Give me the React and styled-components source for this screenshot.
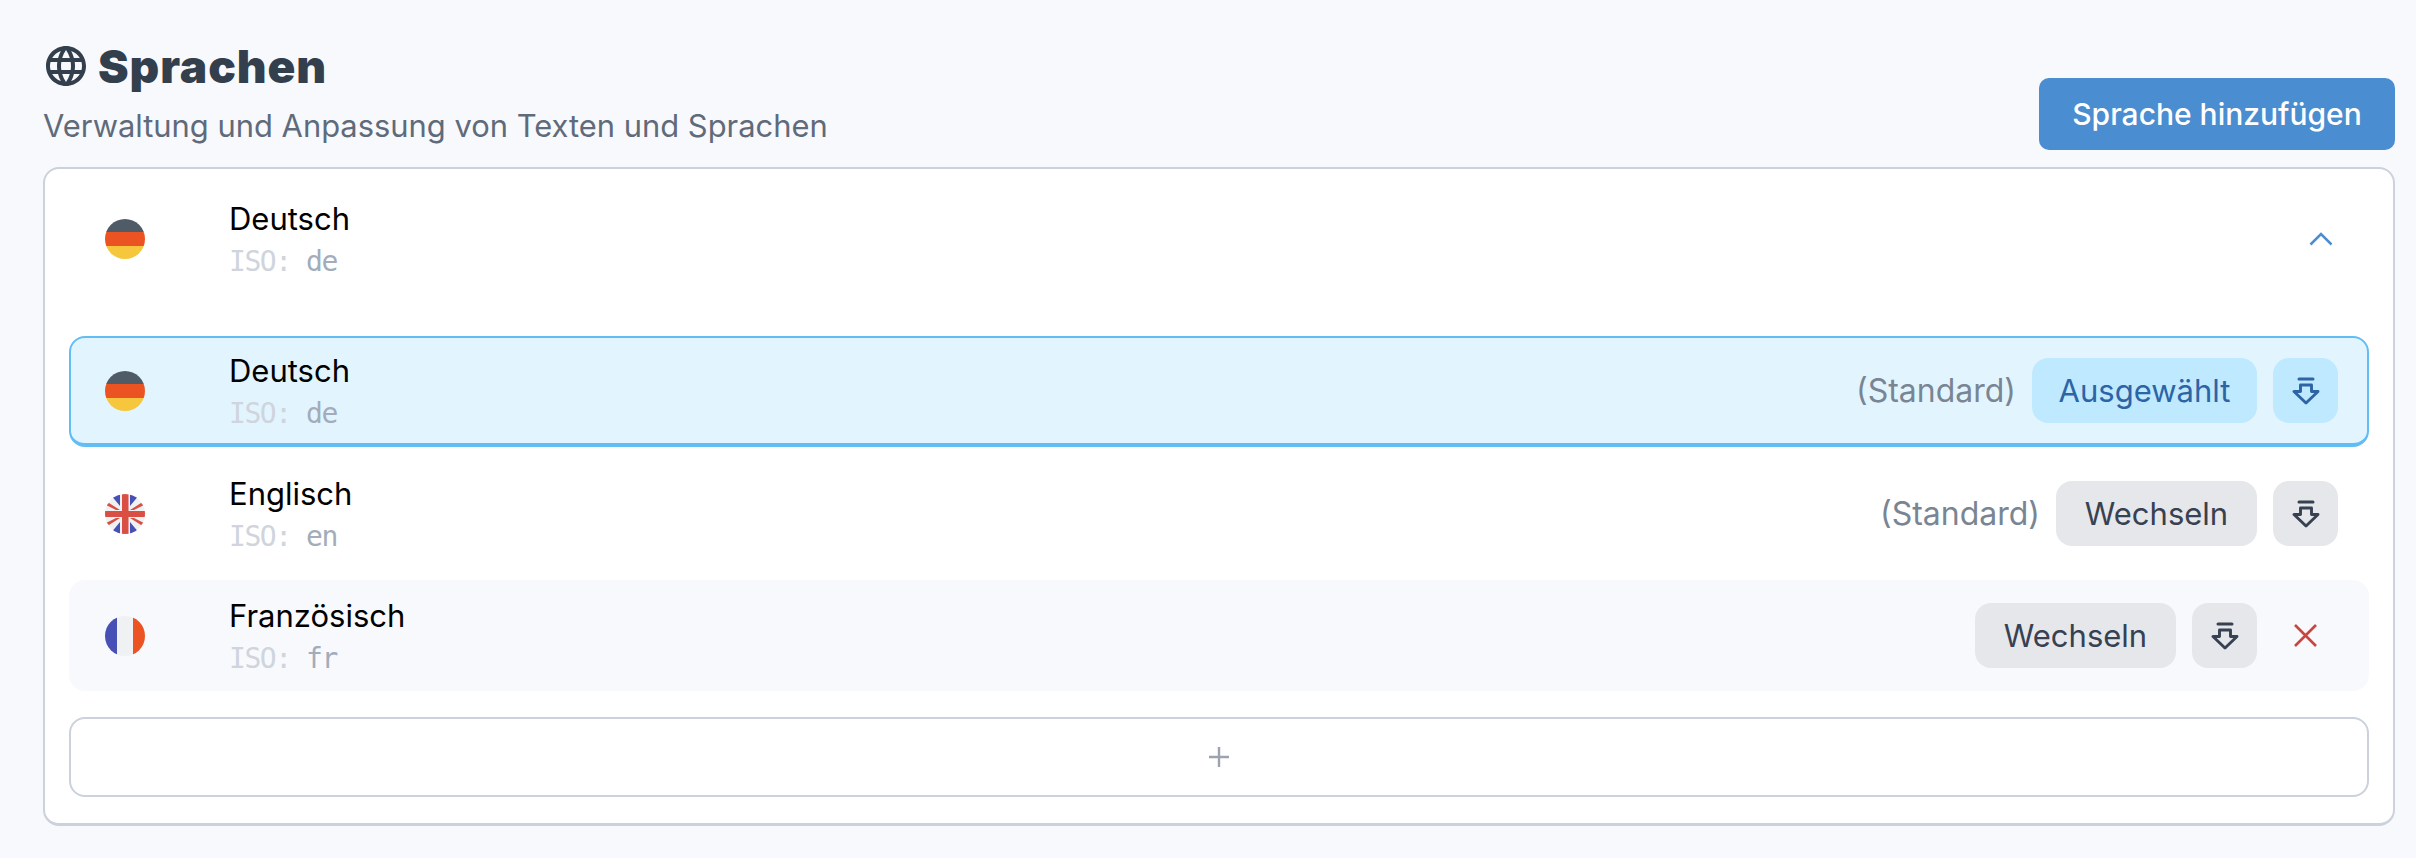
import React from 'react'
import styled, { createGlobalStyle, css } from 'styled-components'
import { MdLanguage } from 'react-icons/md'

const LANGUAGES = [
  { name: 'Deutsch', iso: 'de', flag: 'de', isDefault: true, selected: true },
  { name: 'Englisch', iso: 'en', flag: 'en', isDefault: true },
  { name: 'Französisch', iso: 'fr', flag: 'fr', removable: true, tinted: true },
]

export default function App() {
  return (
    <>
      <GlobalStyle />
      <Page>
        <Header>
          <div>
            <Title>
              <MdLanguage size={48} />
              <span>Sprachen</span>
            </Title>
            <Subtitle>Verwaltung und Anpassung von Texten und Sprachen</Subtitle>
          </div>
          <PrimaryButton>Sprache hinzufügen</PrimaryButton>
        </Header>

        <Card>
          <GroupHeader>
            <FlagCell>
              <Flag code="de" />
            </FlagCell>
            <Info>
              <Name>Deutsch</Name>
              <Iso>
                <IsoLabel>ISO:</IsoLabel> de
              </Iso>
            </Info>
            <Chevron viewBox="0 0 24 14">
              <path d="M1.5 12.5 12 2l10.5 10.5" />
            </Chevron>
          </GroupHeader>

          <List>
            {LANGUAGES.map((lang) => (
              <Row key={lang.iso} $selected={lang.selected} $tinted={lang.tinted}>
                <FlagCell>
                  <Flag code={lang.flag} />
                </FlagCell>
                <Info>
                  <Name>{lang.name}</Name>
                  <Iso>
                    <IsoLabel>ISO:</IsoLabel> {lang.iso}
                  </Iso>
                </Info>
                <Actions>
                  {lang.isDefault && <DefaultNote>(Standard)</DefaultNote>}
                  <ActionButton $selected={lang.selected}>
                    {lang.selected ? 'Ausgewählt' : 'Wechseln'}
                  </ActionButton>
                  <IconButton $selected={lang.selected}>
                    <DownloadIcon />
                  </IconButton>
                  {lang.removable && (
                    <RemoveButton>
                      <svg width="24" height="24" viewBox="0 0 24 24">
                        <path d="M1 1l21 21M22 1 1 22" />
                      </svg>
                    </RemoveButton>
                  )}
                </Actions>
              </Row>
            ))}
          </List>

          <AddRow>
            <svg width="24" height="24" viewBox="0 0 24 24">
              <path d="M12 2v20M2 12h20" />
            </svg>
          </AddRow>
        </Card>
      </Page>
    </>
  )
}

function DownloadIcon() {
  return (
    <svg width="28" height="28" viewBox="0 0 28 28" fill="none" stroke="currentColor" strokeLinejoin="round">
      <path d="M7 2h14" strokeWidth="3" strokeLinecap="round" />
      <path d="M8.5 8h11v6.5H26L14 26 2 14.5h6.5z" strokeWidth="2.9" />
    </svg>
  )
}

function Flag({ code }) {
  return (
    <FlagCircle viewBox="0 0 40 40">
      {code === 'de' && (
        <>
          <rect width="40" height="13" fill="#4f5b66" />
          <rect y="13" width="40" height="14" fill="#eb5322" />
          <rect y="27" width="40" height="13" fill="#f6c63c" />
        </>
      )}
      {code === 'fr' && (
        <>
          <rect width="12" height="40" fill="#4750b5" />
          <rect x="12" width="16" height="40" fill="#f0f1f3" />
          <rect x="28" width="12" height="40" fill="#eb5322" />
        </>
      )}
      {code === 'en' && (
        <>
          <rect width="40" height="40" fill="#f0f1f3" />
          <path d="M5 0h10v12zM35 0H25v12zM5 40h10V28zM35 40H25V28z" fill="#4750b5" />
          <path d="M1 11l3-2 11 7h-4zM39 11l-3-2-11 7h4zM1 29l3 2 11-7h-4zM39 29l-3 2-11-7h4z" fill="#d94f43" />
          <rect x="17" width="6.5" height="40" fill="#d94f43" />
          <rect y="17" width="40" height="6" fill="#d94f43" />
        </>
      )}
    </FlagCircle>
  )
}

const GlobalStyle = createGlobalStyle`
  html, body {
    margin: 0;
    background: #f8f9fd;
  }
  * {
    box-sizing: border-box;
  }
  body {
    font-family: 'Inter', 'Liberation Sans', sans-serif;
  }
`

const Page = styled.div`
  display: flex;
  flex-direction: column;
  min-height: 858px;
  padding: 42px 21px 35px 43px;
`

const Header = styled.div`
  display: flex;
  align-items: flex-end;
  justify-content: space-between;
  margin-bottom: 17px;
`

const Title = styled.h1`
  display: flex;
  align-items: center;
  gap: 8px;
  margin: 0 0 0 -1px;
  height: 48px;
  color: #333f4c;
  font-size: 46px;
  font-weight: 900;
  letter-spacing: 0.9px;
`

const Subtitle = styled.p`
  margin: 16px 0 0;
  padding-bottom: 4px;
  color: #5f6b7a;
  font-size: 30.9px;
  line-height: 40px;
`

const PrimaryButton = styled.button`
  height: 72px;
  width: 356px;
  border: 0;
  border-radius: 10px;
  background: #4a8dd1;
  color: #fff;
  font: 500 30px 'Inter', sans-serif;
`

const Card = styled.div`
  display: flex;
  flex-direction: column;
  border: 2px solid #cbd2dc;
  border-bottom-width: 3px;
  border-radius: 16px;
  background: #fff;
  padding: 0 24px 26px;
`

const GroupHeader = styled.div`
  display: flex;
  align-items: center;
  height: 139px;
  padding-left: 36px;
  padding-right: 36px;
`

const FlagCell = styled.div`
  display: flex;
  flex: 0 0 124px;
`

const FlagCircle = styled.svg`
  width: 40px;
  height: 40px;
  border-radius: 50%;
`

const Info = styled.div`
  display: flex;
  flex: 1;
  flex-direction: column;
  gap: 10px;
`

const Name = styled.div`
  color: #000;
  font-size: 31px;
  line-height: 36px;
`

const Iso = styled.div`
  color: #a2acba;
  font-family: 'DejaVu Sans Mono', monospace;
  font-size: 28px;
  letter-spacing: -1.45px;
  line-height: 30px;
`

const IsoLabel = styled.span`
  color: #cfd4dd;
`

const Chevron = styled.svg`
  width: 24px;
  height: 14px;
  fill: none;
  stroke: #4a8dd1;
  stroke-width: 2.5;
`

const List = styled.div`
  display: flex;
  flex-direction: column;
  gap: 11px;
  margin-top: 28px;
`

const Row = styled.div`
  display: flex;
  align-items: center;
  height: 111px;
  padding: 0 31px 0 36px;
  border-radius: 16px;

  ${(props) =>
    props.$tinted &&
    css`
      background: #f8f9fd;
    `};

  ${(props) =>
    props.$selected &&
    css`
      background: #e2f5ff;
      border: 2px solid #63bdf5;
      border-bottom-width: 4px;
      padding: 0 29px 0 34px;
    `};
`

const Actions = styled.div`
  display: flex;
  align-items: center;
  gap: 16px;
`

const DefaultNote = styled.span`
  color: #7a8594;
  font-size: 32px;
`

const ActionButton = styled.button`
  height: 65px;
  width: ${(props) => (props.$selected ? '225px' : '201px')};
  border: 0;
  border-radius: 16px;
  background: ${(props) => (props.$selected ? '#bfe9ff' : '#e5e7eb')};
  color: ${(props) => (props.$selected ? '#2c64a5' : '#374151')};
  font: 400 31px 'Inter', sans-serif;
`

const IconButton = styled.button`
  display: flex;
  align-items: center;
  justify-content: center;
  width: 65px;
  height: 65px;
  padding: 0;
  border: 0;
  border-radius: 16px;
  background: ${(props) => (props.$selected ? '#bfe9ff' : '#e5e7eb')};
  color: ${(props) => (props.$selected ? '#2c64a5' : '#374151')};
`

const RemoveButton = styled.button`
  display: flex;
  align-items: center;
  justify-content: center;
  width: 65px;
  height: 65px;
  padding: 0;
  border: 0;
  background: none;

  path {
    fill: none;
    stroke: #c9463d;
    stroke-width: 2.6;
  }
`

const AddRow = styled.div`
  display: flex;
  align-items: center;
  justify-content: center;
  height: 80px;
  margin-top: 26px;
  border: 2px solid #cbd2dc;
  border-radius: 16px;

  path {
    fill: none;
    stroke: #9ca3af;
    stroke-width: 2.4;
  }
`
